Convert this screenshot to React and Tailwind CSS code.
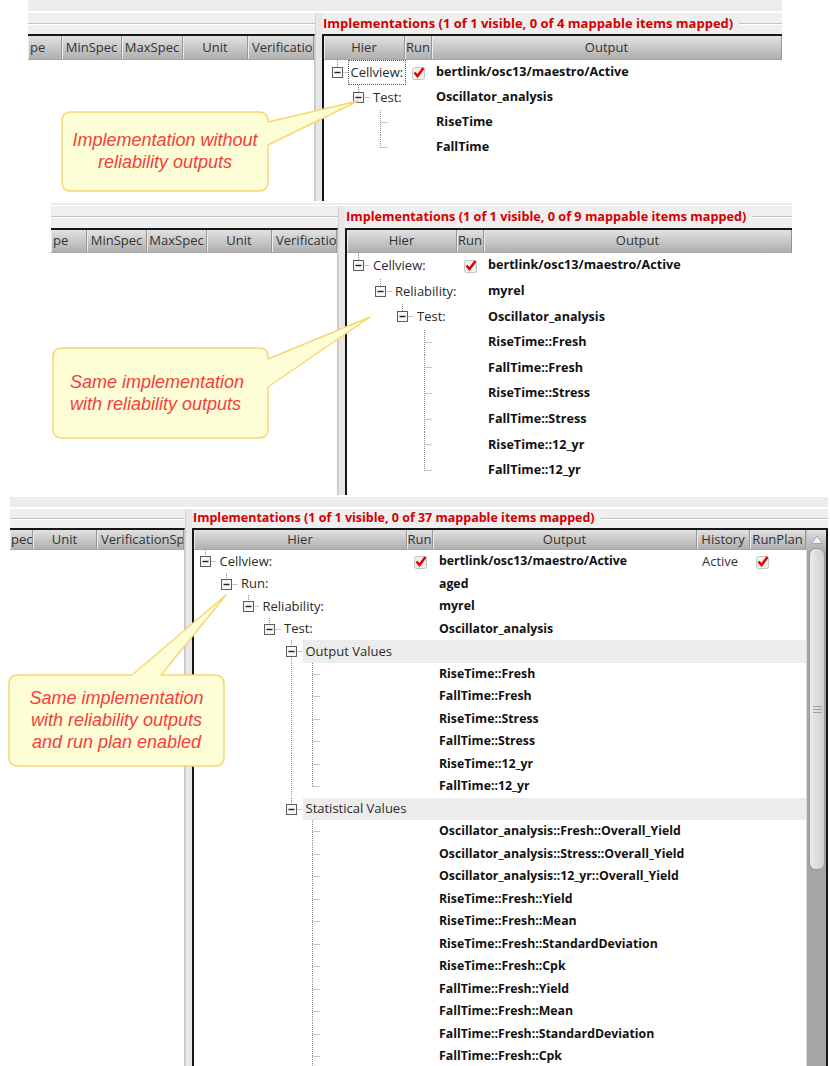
import React from "react";

const LINE = "#8e8e8e";

function Check() {
  return (
    <svg width="15" height="15" viewBox="0 0 15 15" className="block">
      <rect x="1.5" y="2.5" width="12" height="12" rx="2" fill="#f0f0f0" stroke="#c4c4c4" />
      <path d="M3.5 7.5 L6.5 11 L12.5 3" fill="none" stroke="#e00000" strokeWidth="2.5" />
    </svg>
  );
}

function TreeGlyph({ r, indent, h }) {
  const w = (r.lv + 1) * indent;
  const cx = (j) => Math.floor(j * indent + 10) + 0.5;
  const cy = Math.floor(h / 2) + 0.5;
  const x = cx(r.lv);
  const dash = { stroke: LINE, strokeDasharray: "1 1", strokeWidth: 1 };
  return (
    <svg width={w} height={h} className="block shrink-0">
      {(r.cont || []).map((j) => (
        <line key={j} x1={cx(j)} x2={cx(j)} y1={0} y2={h} {...dash} />
      ))}
      {r.node ? (
        <g>
          <line x1={x} x2={x} y1={0} y2={cy - 5} {...dash} />
          {r.next && <line x1={x} x2={x} y1={cy + 5} y2={h} {...dash} />}
          <line x1={x + 5} x2={w} y1={cy} y2={cy} {...dash} />
          <rect x={x - 5} y={cy - 5} width={10} height={10} fill="#f7f7f7" stroke="#5c5c5c" />
          <line x1={x - 3} x2={x + 3} y1={cy} y2={cy} stroke="#222" strokeWidth={1.4} />
        </g>
      ) : (
        <g>
          <line x1={x} x2={x} y1={0} y2={r.next ? h : cy} {...dash} />
          <line x1={x} x2={x + 8} y1={cy} y2={cy} {...dash} />
        </g>
      )}
    </svg>
  );
}

const leaf = (lv, out, next = true, cont) => ({ lv, out, next, cont });

const ROWS1 = [
  { lv: 0, node: true, label: "Cellview:", out: "bertlink/osc13/maestro/Active", run: true, focus: true },
  { lv: 1, node: true, label: "Test:", out: "Oscillator_analysis" },
  leaf(2, "RiseTime"),
  leaf(2, "FallTime", false),
];

const ROWS2 = [
  { lv: 0, node: true, label: "Cellview:", out: "bertlink/osc13/maestro/Active", run: true },
  { lv: 1, node: true, label: "Reliability:", out: "myrel" },
  { lv: 2, node: true, label: "Test:", out: "Oscillator_analysis" },
  leaf(3, "RiseTime::Fresh"),
  leaf(3, "FallTime::Fresh"),
  leaf(3, "RiseTime::Stress"),
  leaf(3, "FallTime::Stress"),
  leaf(3, "RiseTime::12_yr"),
  leaf(3, "FallTime::12_yr", false),
];

const ROWS3 = [
  { lv: 0, node: true, label: "Cellview:", out: "bertlink/osc13/maestro/Active", run: true, history: "Active", plan: true },
  { lv: 1, node: true, label: "Run:", out: "aged" },
  { lv: 2, node: true, label: "Reliability:", out: "myrel" },
  { lv: 3, node: true, label: "Test:", out: "Oscillator_analysis" },
  { lv: 4, node: true, label: "Output Values", hl: true, next: true },
  leaf(5, "RiseTime::Fresh", true, [4]),
  leaf(5, "FallTime::Fresh", true, [4]),
  leaf(5, "RiseTime::Stress", true, [4]),
  leaf(5, "FallTime::Stress", true, [4]),
  leaf(5, "RiseTime::12_yr", true, [4]),
  leaf(5, "FallTime::12_yr", false, [4]),
  { lv: 4, node: true, label: "Statistical Values", hl: true },
  leaf(5, "Oscillator_analysis::Fresh::Overall_Yield"),
  leaf(5, "Oscillator_analysis::Stress::Overall_Yield"),
  leaf(5, "Oscillator_analysis::12_yr::Overall_Yield"),
  leaf(5, "RiseTime::Fresh::Yield"),
  leaf(5, "RiseTime::Fresh::Mean"),
  leaf(5, "RiseTime::Fresh::StandardDeviation"),
  leaf(5, "RiseTime::Fresh::Cpk"),
  leaf(5, "FallTime::Fresh::Yield"),
  leaf(5, "FallTime::Fresh::Mean"),
  leaf(5, "FallTime::Fresh::StandardDeviation"),
  leaf(5, "FallTime::Fresh::Cpk"),
];

const PANELS = [
  {
    wrap: "ml-[28px] w-[754px] h-[201px]",
    strip: "h-[11px]",
    gap: "h-[2px]",
    band: "h-[21px]",
    header: "h-[24px]",
    row: "h-[25px]",
    rowH: 25,
    left: "w-[287px]",
    leftCols: [
      ["w-[34px] justify-start pl-[2px]", "pe"],
      ["w-[60px]", "MinSpec"],
      ["w-[61px]", "MaxSpec"],
      ["w-[65px]", "Unit"],
      ["flex-1 justify-start pl-[4px]", "Verificatio"],
    ],
    title: "Implementations (1 of 1 visible, 0 of 4 mappable items mapped)",
    titleSize: "text-[13px]",
    outSize: "text-[12.6px]",
    hier: "w-[81px]",
    run: "w-[27px]",
    out: "flex-1 pl-[4px]",
    treePad: "pl-[3px]",
    indent: 21.5,
    rows: ROWS1,
  },
  {
    wrap: "ml-[51px] w-[741px] h-[292px] mt-[2px]",
    strip: "h-[2px]",
    gap: "h-[1px]",
    band: "h-[22px]",
    header: "h-[23px]",
    row: "h-[25.6px]",
    rowH: 25.6,
    left: "w-[287px]",
    leftCols: [
      ["w-[36px] justify-start pl-[2px]", "pe"],
      ["w-[60px]", "MinSpec"],
      ["w-[60px]", "MaxSpec"],
      ["w-[65px]", "Unit"],
      ["flex-1 justify-start pl-[4px]", "Verificatio"],
    ],
    title: "Implementations (1 of 1 visible, 0 of 9 mappable items mapped)",
    titleSize: "text-[12.7px]",
    outSize: "text-[12.6px]",
    hier: "w-[110px]",
    run: "w-[27px]",
    out: "flex-1 pl-[4px]",
    treePad: "pl-[1px]",
    indent: 22,
    rows: ROWS2,
  },
  {
    wrap: "ml-[10px] w-[818px] h-[569px] mt-[2px]",
    strip: "h-[10px]",
    gap: "h-[2px]",
    band: "h-[19px]",
    header: "h-[20px]",
    row: "h-[22.5px]",
    rowH: 22.5,
    left: "w-[175px]",
    leftCols: [
      ["w-[23px] justify-start pl-[1px]", "pec"],
      ["w-[64px]", "Unit"],
      ["flex-1 justify-start pl-[4px]", "VerificationSp"],
    ],
    title: "Implementations (1 of 1 visible, 0 of 37 mappable items mapped)",
    titleSize: "text-[12.5px]",
    outSize: "text-[12.3px]",
    hier: "w-[213px]",
    run: "w-[26px]",
    out: "w-[264px] pl-[6px]",
    extra: true,
    treePad: "pl-[1px]",
    indent: 21.5,
    rows: ROWS3,
    scroll: true,
    rightBorder: true,
  },
];

const HEAD = "bg-linear-to-b from-[#e2e2e2] to-[#afafaf] border-b border-[#a6a6a6]";
const HCELL = "flex items-center justify-center h-full border-r border-[#969696] whitespace-nowrap overflow-hidden shadow-[inset_1px_0_0_#ececec]";

function TreeRow({ r, p }) {
  const hl = r.hl ? "bg-[#ececec]" : "";
  return (
    <div className={"flex shrink-0 " + p.row}>
      <div className={"flex items-center shrink-0 " + p.hier + " " + p.treePad}>
        <TreeGlyph r={r} indent={p.indent} h={p.rowH} />
        {r.node && (
          <div className={"flex items-center h-full flex-1 pl-[3px] whitespace-nowrap text-[#2a2a2a] " + hl}>
            {r.focus ? (
              <span className="-ml-[3px] px-[2px] py-[2px] outline-1 outline-dotted outline-[#555]">{r.label}</span>
            ) : (
              r.label
            )}
          </div>
        )}
      </div>
      <div className={"flex items-center justify-center shrink-0 " + p.run + " " + hl}>{r.run && <Check />}</div>
      <div className={"flex items-center font-bold text-[#111] whitespace-nowrap " + p.outSize + " " + p.out + " " + hl}>{r.out}</div>
      {p.extra && (
        <>
          <div className={"flex items-center w-[53px] pl-[5px] text-[#333] " + hl}>{r.history}</div>
          <div className={"flex items-center w-[56px] pl-[5px] " + hl}>{r.plan && <Check />}</div>
        </>
      )}
    </div>
  );
}

function Scrollbar({ p }) {
  return (
    <div className="w-[20px] shrink-0 flex flex-col">
      <div className={"flex items-center justify-center border-l border-[#bdbdbd] " + p.header + " " + HEAD}>
        <svg width="14" height="11" className="block">
          <path d="M1.5 9.5 L7 2 L12.5 9.5 Z" fill="#f5f5f5" stroke="#a6a6a6" />
        </svg>
      </div>
      <div className="flex-1 bg-[#a5a5a5] pl-[2px] pr-[1px] border-l border-[#d8d8d8]">
        <div className="h-[322px] -mt-[2px] rounded-[7px] bg-linear-to-r from-[#ebebeb] to-[#cfcfcf] border border-[#999] flex flex-col items-center justify-center gap-[2px]">
          <div className="w-[9px] h-px bg-[#a2a2a2]" />
          <div className="w-[9px] h-px bg-[#a2a2a2]" />
          <div className="w-[9px] h-px bg-[#a2a2a2]" />
        </div>
      </div>
    </div>
  );
}

function Panel({ p }) {
  return (
    <div className={"flex flex-col overflow-hidden bg-[#efefef] font-['Open_Sans',sans-serif] text-[13px] " + p.wrap}>
      <div className={"shrink-0 bg-[#ececec] " + p.strip} />
      <div className={"shrink-0 bg-white " + p.gap} />
      <div className="flex-1 flex min-h-0">
        <div className={"shrink-0 flex flex-col " + p.left}>
          <div className={"shrink-0 flex flex-col justify-center " + p.band}>
            <div className="border-t border-[#c3c3c3] border-b border-b-white" />
          </div>
          <div className="flex-1 flex flex-col bg-white border-t-2 border-t-[#161616] border-r border-r-[#c6c6c6]">
            <div className={"flex shrink-0 text-[#333] " + p.header + " " + HEAD}>
              {p.leftCols.map(([cls, t], i) => (
                <div key={i} className={HCELL + " " + cls}>{t}</div>
              ))}
            </div>
          </div>
        </div>
        <div className="w-[7px] shrink-0 bg-[#e7e7e7] border-l border-[#d3d3d3]" />
        <div className="flex-1 flex flex-col min-w-0">
          <div className={"shrink-0 flex items-center " + p.band}>
            <span className={"font-bold text-[#d40000] whitespace-nowrap pl-[1px] " + p.titleSize}>{p.title}</span>
            <div className="flex-1 ml-[6px] border-t border-[#c3c3c3] border-b border-b-white" />
          </div>
          <div className={"flex-1 flex min-h-0 border-l-2 border-t-2 border-[#161616] " + (p.rightBorder ? "border-r-2" : "border-r-0")}>
            <div className="flex-1 flex flex-col min-w-0 bg-white">
              <div className={"flex shrink-0 text-[#333] " + p.header + " " + HEAD}>
                <div className={HCELL + " shrink-0 " + p.hier}>Hier</div>
                <div className={HCELL + " shrink-0 " + p.run}>Run</div>
                <div className={HCELL + " " + (p.extra ? "w-[264px]" : "flex-1")}>Output</div>
                {p.extra && (
                  <>
                    <div className={HCELL + " w-[53px]"}>History</div>
                    <div className={HCELL + " w-[56px]"}>RunPlan</div>
                  </>
                )}
              </div>
              {p.rows.map((r, i) => (
                <TreeRow key={i} r={r} p={p} />
              ))}
            </div>
            {p.scroll && <Scrollbar p={p} />}
          </div>
        </div>
      </div>
    </div>
  );
}

export default function App() {
  return (
    <div className="relative w-[830px] h-[1066px] bg-white overflow-hidden">
      {PANELS.map((p, i) => (
        <Panel key={i} p={p} />
      ))}

      <svg className="absolute left-0 top-0 pointer-events-none" width="830" height="1066">
        <g fill="#fdfdd6" stroke="#f6d772" strokeWidth="1.5" strokeLinejoin="round">
          <path d="M71 112 H259 Q268 112 268 121 V122 L358 101 L268 145 V182 Q268 191 259 191 H71 Q62 191 62 182 V121 Q62 112 71 112 Z" />
          <path d="M62 348 H259 Q268 348 268 357 V359 L370 317 L268 387 V429 Q268 438 259 438 H62 Q53 438 53 429 V357 Q53 348 62 348 Z" />
          <path d="M18 675 H132 L226 595 L161 675 H215 Q224 675 224 684 V757 Q224 766 215 766 H18 Q9 766 9 757 V684 Q9 675 18 675 Z" />
        </g>
      </svg>

      <div className="absolute left-[62px] top-[129px] w-[206px] text-center italic text-[18px] leading-[22px] text-[#f53d3d] font-['Liberation_Sans',Arial,sans-serif]">
        Implementation without
        <br />
        reliability outputs
      </div>
      <div className="absolute left-[70px] top-[371px] italic text-[18px] leading-[22px] text-[#f53d3d] font-['Liberation_Sans',Arial,sans-serif]">
        Same implementation
        <br />
        with reliability outputs
      </div>
      <div className="absolute left-[9px] top-[687px] w-[215px] text-center italic text-[18px] leading-[22px] text-[#f53d3d] font-['Liberation_Sans',Arial,sans-serif]">
        Same implementation
        <br />
        with reliability outputs
        <br />
        and run plan enabled
      </div>
    </div>
  );
}
